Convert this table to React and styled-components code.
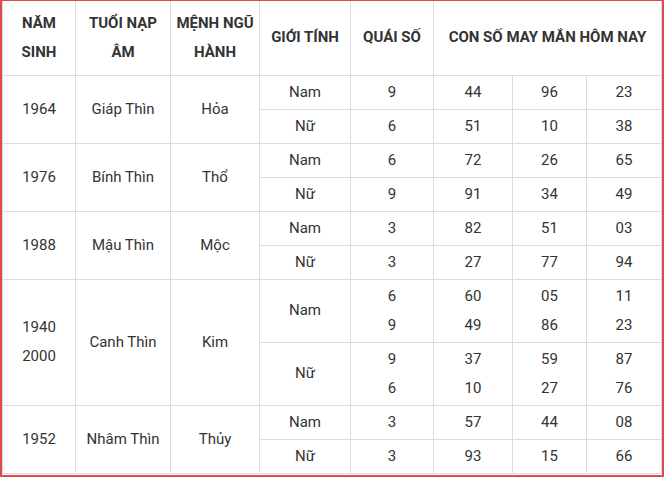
import React from "react";
import styled, { createGlobalStyle } from "styled-components";

const GlobalStyle = createGlobalStyle`
  html, body {
    margin: 0;
    padding: 0;
    background: #fff;
  }
  body {
    font-family: Roboto, "Liberation Sans", Arial, sans-serif;
  }
`;

export const Frame = styled.div`
  width: 664px;
  height: 477px;
  box-sizing: border-box;
  border: 2px solid #df4b4d;
  border-top-width: 1px;
  background: #fff;
  overflow: hidden;
`;

export const Table = styled.table`
  width: 659px;
  border-collapse: collapse;
  table-layout: fixed;
  color: #333;
  font-size: 15px;
  line-height: 29px;
`;

export const HeadCell = styled.th`
  border: 1px solid #dcdcdc;
  border-top: none;
  padding: 0 4px;
  font-weight: 700;
  text-align: center;
  vertical-align: middle;
  color: #333;
`;

export const Cell = styled.td`
  border: 1px solid #dcdcdc;
  padding: 0 4px;
  text-align: center;
  vertical-align: middle;
  white-space: nowrap;
`;

export const HeadRow = styled.tr`
  height: 74px;
`;

export const Row = styled.tr`
  height: ${(p) => (p.$tall ? "63px" : "34px")};
`;

const widths = [73, 95, 89, 91, 83, 79, 74, 75];

const data = [
  {
    year: ["1964"],
    tuoi: "Giáp Thìn",
    menh: "Hỏa",
    rows: [
      { gender: "Nam", quai: ["9"], nums: [["44"], ["96"], ["23"]] },
      { gender: "Nữ", quai: ["6"], nums: [["51"], ["10"], ["38"]] },
    ],
  },
  {
    year: ["1976"],
    tuoi: "Bính Thìn",
    menh: "Thổ",
    rows: [
      { gender: "Nam", quai: ["6"], nums: [["72"], ["26"], ["65"]] },
      { gender: "Nữ", quai: ["9"], nums: [["91"], ["34"], ["49"]] },
    ],
  },
  {
    year: ["1988"],
    tuoi: "Mậu Thìn",
    menh: "Mộc",
    rows: [
      { gender: "Nam", quai: ["3"], nums: [["82"], ["51"], ["03"]] },
      { gender: "Nữ", quai: ["3"], nums: [["27"], ["77"], ["94"]] },
    ],
  },
  {
    year: ["1940", "2000"],
    tuoi: "Canh Thìn",
    menh: "Kim",
    tall: true,
    rows: [
      {
        gender: "Nam",
        quai: ["6", "9"],
        nums: [
          ["60", "49"],
          ["05", "86"],
          ["11", "23"],
        ],
      },
      {
        gender: "Nữ",
        quai: ["9", "6"],
        nums: [
          ["37", "10"],
          ["59", "27"],
          ["87", "76"],
        ],
      },
    ],
  },
  {
    year: ["1952"],
    tuoi: "Nhâm Thìn",
    menh: "Thủy",
    rows: [
      { gender: "Nam", quai: ["3"], nums: [["57"], ["44"], ["08"]] },
      { gender: "Nữ", quai: ["3"], nums: [["93"], ["15"], ["66"]] },
    ],
  },
];

function Lines({ items }) {
  return items.map((t, i) => (
    <React.Fragment key={i}>
      {i > 0 && <br />}
      {t}
    </React.Fragment>
  ));
}

function App() {
  return (
    <>
      <GlobalStyle />
      <Frame>
        <Table>
          <colgroup>
            {widths.map((w, i) => (
              <col key={i} style={{ width: w }} />
            ))}
          </colgroup>
          <thead>
            <HeadRow>
              <HeadCell>NĂM SINH</HeadCell>
              <HeadCell>TUỔI NẠP ÂM</HeadCell>
              <HeadCell>MỆNH NGŨ HÀNH</HeadCell>
              <HeadCell>GIỚI TÍNH</HeadCell>
              <HeadCell>QUÁI SỐ</HeadCell>
              <HeadCell colSpan={3}>CON SỐ MAY MẮN HÔM NAY</HeadCell>
            </HeadRow>
          </thead>
          <tbody>
            {data.map((g) =>
              g.rows.map((r, i) => (
                <Row key={g.tuoi + i} $tall={g.tall}>
                  {i === 0 && (
                    <>
                      <Cell rowSpan={2}>
                        <Lines items={g.year} />
                      </Cell>
                      <Cell rowSpan={2}>{g.tuoi}</Cell>
                      <Cell rowSpan={2}>{g.menh}</Cell>
                    </>
                  )}
                  <Cell>{r.gender}</Cell>
                  <Cell>
                    <Lines items={r.quai} />
                  </Cell>
                  {r.nums.map((n, j) => (
                    <Cell key={j}>
                      <Lines items={n} />
                    </Cell>
                  ))}
                </Row>
              ))
            )}
          </tbody>
        </Table>
      </Frame>
    </>
  );
}

export default App;
